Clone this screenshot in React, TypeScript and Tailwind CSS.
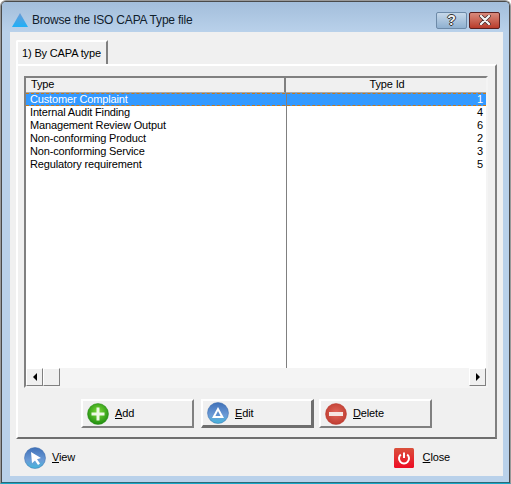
import React from 'react';

const rows = [
  { type: 'Customer Complaint', id: 1 },
  { type: 'Internal Audit Finding', id: 4 },
  { type: 'Management Review Output', id: 6 },
  { type: 'Non-conforming Product', id: 2 },
  { type: 'Non-conforming Service', id: 3 },
  { type: 'Regulatory requirement', id: 5 },
];

const AddIcon = () => (
  <svg width="22" height="22" viewBox="0 0 22 22">
    <defs>
      <radialGradient id="addG" cx="50%" cy="40%" r="60%">
        <stop offset="0%" stopColor="#7fdc3a" />
        <stop offset="100%" stopColor="#1f8f10" />
      </radialGradient>
    </defs>
    <circle cx="11" cy="11" r="10.5" fill="url(#addG)" stroke="#2a8a1a" strokeWidth="0.5" />
    <path d="M9.5 4.5h3v5h5v3h-5v5h-3v-5h-5v-3h5z" fill="#eef8e6" />
  </svg>
);

const BlueCircle = ({ id, children }: { id: string; children: React.ReactNode }) => (
  <svg width="22" height="22" viewBox="0 0 22 22">
    <defs>
      <linearGradient id={id} x1="0" y1="0" x2="0" y2="1">
        <stop offset="0%" stopColor="#3f70b8" />
        <stop offset="60%" stopColor="#6b9ad6" />
        <stop offset="100%" stopColor="#45b6dc" />
      </linearGradient>
    </defs>
    <circle cx="11" cy="11" r="10.5" fill={`url(#${id})`} stroke="#3d6cab" strokeWidth="0.5" />
    {children}
  </svg>
);

const DeleteIcon = () => (
  <svg width="22" height="22" viewBox="0 0 22 22">
    <defs>
      <radialGradient id="delG" cx="50%" cy="45%" r="60%">
        <stop offset="0%" stopColor="#e2685c" />
        <stop offset="100%" stopColor="#bd3a2e" />
      </radialGradient>
    </defs>
    <circle cx="11" cy="11" r="10.5" fill="url(#delG)" stroke="#b8392f" strokeWidth="0.5" />
    <rect x="4" y="9" width="14" height="4" fill="#f6e6e2" />
  </svg>
);

const PowerIcon = () => (
  <svg width="20" height="20" viewBox="0 0 20 20">
    <defs>
      <linearGradient id="pwrG" x1="0" y1="0" x2="0" y2="1">
        <stop offset="0%" stopColor="#d9503c" />
        <stop offset="100%" stopColor="#ee0c24" />
      </linearGradient>
    </defs>
    <rect width="20" height="20" rx="1.5" fill="url(#pwrG)" />
    <path d="M6.8 6.6a5 5 0 1 0 6.4 0" fill="none" stroke="#fff" strokeWidth="2" />
    <path d="M10 4.5v5.5" stroke="#fff" strokeWidth="2" />
  </svg>
);

const Arrow = ({ dir }: { dir: 'left' | 'right' }) => (
  <svg width="4" height="8" viewBox="0 0 4 8">
    <path d={dir === 'left' ? 'M4 0v8L0 4z' : 'M0 0v8l4-4z'} fill="#000" />
  </svg>
);

const ActionButton = ({ icon, first, rest, active }: { icon: React.ReactNode; first: string; rest: string; active?: boolean }) => (
  <button
    className={`flex h-[29px] w-[113px] items-center border-t-2 border-l-2 border-t-white border-l-white pl-[4px] ${
      active ? 'border-r-[3px] border-b-[3px] border-r-[#6e6e6e] border-b-[#6e6e6e]' : 'border-r-2 border-b-2 border-r-[#808080] border-b-[#808080]'
    }`}
  >
    {icon}
    <span className="ml-[6px]"><u>{first}</u>{rest}</span>
  </button>
);

export default function App() {
  return (
    <div className="h-[484px] w-[511px] bg-white font-['Liberation_Sans',Arial,sans-serif] text-[11px] leading-[13px] tracking-[-0.15px] text-black">
      <div className="h-full rounded-t-[6px] border border-[#9a9a9a] border-b-[#18a8c8]">
        <div className="flex h-full flex-col overflow-hidden rounded-t-[5px] border border-[#4a4a4a] border-b-[#2c6a78] bg-[#b9d1ea]">
          {/* Title bar */}
          <div className="flex h-[30px] shrink-0 items-center bg-gradient-to-b from-[#a3bedb] to-[#b9d1ea] pt-[6px] pr-[9px] pl-[10px]">
            <svg width="16" height="14" viewBox="0 0 16 14">
              <defs>
                <linearGradient id="logoG" x1="0" y1="0" x2="0" y2="1">
                  <stop offset="0%" stopColor="#6c9ad4" />
                  <stop offset="100%" stopColor="#1fb0f8" />
                </linearGradient>
              </defs>
              <path d="M8 0L16 14H0z" fill="url(#logoG)" />
            </svg>
            <span className="ml-[4px] text-[12px] tracking-[-0.2px] text-[#10202c]">Browse the ISO CAPA Type file</span>
            <div className="ml-auto flex gap-[2px]">
              <div className="flex h-[17px] w-[31px] items-center justify-center rounded-[2px] border border-[#6d8aa8] bg-gradient-to-b from-[#c6d8ea] to-[#8fb0d0] text-[14px] font-bold text-[#f4f4f4] [text-shadow:1px_0_0_#333,-1px_0_0_#333,0_1px_0_#333,0_-1px_0_#333]">?</div>
              <div className="flex h-[17px] w-[31px] items-center justify-center rounded-[2px] border border-[#5a2020] bg-gradient-to-b from-[#d88a7c] to-[#b83a2a]">
                <svg width="14" height="10" viewBox="0 0 14 10">
                  <path d="M3 1l8 8M11 1l-8 8" stroke="#3a2020" strokeWidth="3.6" strokeLinecap="round" />
                  <path d="M3 1l8 8M11 1l-8 8" stroke="#f4f4f4" strokeWidth="2.4" strokeLinecap="round" />
                </svg>
              </div>
            </div>
          </div>

          {/* Body */}
          <div className="mr-[6px] ml-[8px] flex flex-1 flex-col bg-[#f0f0f0]">
            <div className="flex flex-col pt-[8px] pr-[6px] pl-[6px]">
              {/* Tab */}
              <div className="flex h-[24px] w-[92px] items-center rounded-tl-[2px] border-t-2 border-r-2 border-l-2 border-t-white border-r-[#808080] border-l-white pl-[4px] whitespace-nowrap">
                1) By CAPA type
              </div>
              {/* Tab panel */}
              <div className="h-[375px] border-2 border-t-white border-r-[#808080] border-b-[#6e6e6e] border-l-white pt-[10px] pr-[6px] pl-[6px]">
                {/* List */}
                <div className="flex h-[312px] w-[464px] flex-col border-2 border-t-[#808080] border-r-[#f4f4f4] border-b-[#f4f4f4] border-l-[#808080] bg-white">
                  <div className="flex h-[15px] shrink-0 bg-[#f0f0f0]">
                    <div className="w-[260px] border-r-2 border-b border-r-[#808080] border-b-[#a8a8a8] pl-[5px]">Type</div>
                    <div className="flex-1 border-b border-b-[#a8a8a8] pl-[2px] text-center">Type Id</div>
                  </div>
                  <div className="relative flex min-h-0 flex-1 flex-col">
                    <div className="absolute top-0 bottom-0 left-[260px] w-px bg-[#808080]" />
                    {rows.map((row, i) => (
                      <div
                        key={row.id}
                        className={`flex h-[13px] shrink-0 items-center pr-[3px] ${
                          i === 0 ? 'border-y border-dashed border-y-[#c87818] bg-[#3399ff] text-white' : ''
                        }`}
                      >
                        <span className="w-[261px] pl-[4px]">{row.type}</span>
                        <span className="flex-1 text-right">{row.id}</span>
                      </div>
                    ))}
                  </div>
                  {/* Scrollbar */}
                  <div className="flex h-[18px] shrink-0 bg-[#f4f4f4] bg-[radial-gradient(#dcdcdc_0.5px,transparent_0.5px)] bg-[length:2px_2px]">
                    <div className="flex w-[17px] items-center justify-center border border-t-white border-r-[#808080] border-b-[#808080] border-l-white bg-[#f0f0f0]"><Arrow dir="left" /></div>
                    <div className="w-[17px] border border-t-white border-r-[#808080] border-b-[#808080] border-l-white bg-[#f0f0f0]" />
                    <div className="ml-auto flex w-[17px] items-center justify-center border border-t-white border-r-[#808080] border-b-[#808080] border-l-white bg-[#f0f0f0]"><Arrow dir="right" /></div>
                  </div>
                </div>
                {/* Actions */}
                <div className="mt-[11px] flex pl-[57px]">
                  <ActionButton icon={<AddIcon />} first="A" rest="dd" />
                  <div className="ml-[7px]">
                    <ActionButton
                      active
                      icon={
                        <BlueCircle id="editG">
                          <path d="M11 5l6 11H5z" fill="#fff" />
                          <path d="M11 9l2.6 5H8.4z" fill="#5d8fce" />
                        </BlueCircle>
                      }
                      first="E"
                      rest="dit"
                    />
                  </div>
                  <div className="ml-[5px]">
                    <ActionButton icon={<DeleteIcon />} first="D" rest="elete" />
                  </div>
                </div>
              </div>
            </div>

            {/* Footer */}
            <div className="flex flex-1 items-center pr-[53px] pl-[14px]">
              <BlueCircle id="viewG">
                <path d="M7 5l10 6-4 1.2 3 4.3-2 1.4-3-4.4-3 2.8z" fill="#fff" />
              </BlueCircle>
              <span className="ml-[6px]"><u>V</u>iew</span>
              <div className="ml-auto flex items-center">
                <PowerIcon />
                <span className="ml-[9px]"><u>C</u>lose</span>
              </div>
            </div>
          </div>
          <div className="h-[6px] shrink-0" />
        </div>
      </div>
    </div>
  );
}
